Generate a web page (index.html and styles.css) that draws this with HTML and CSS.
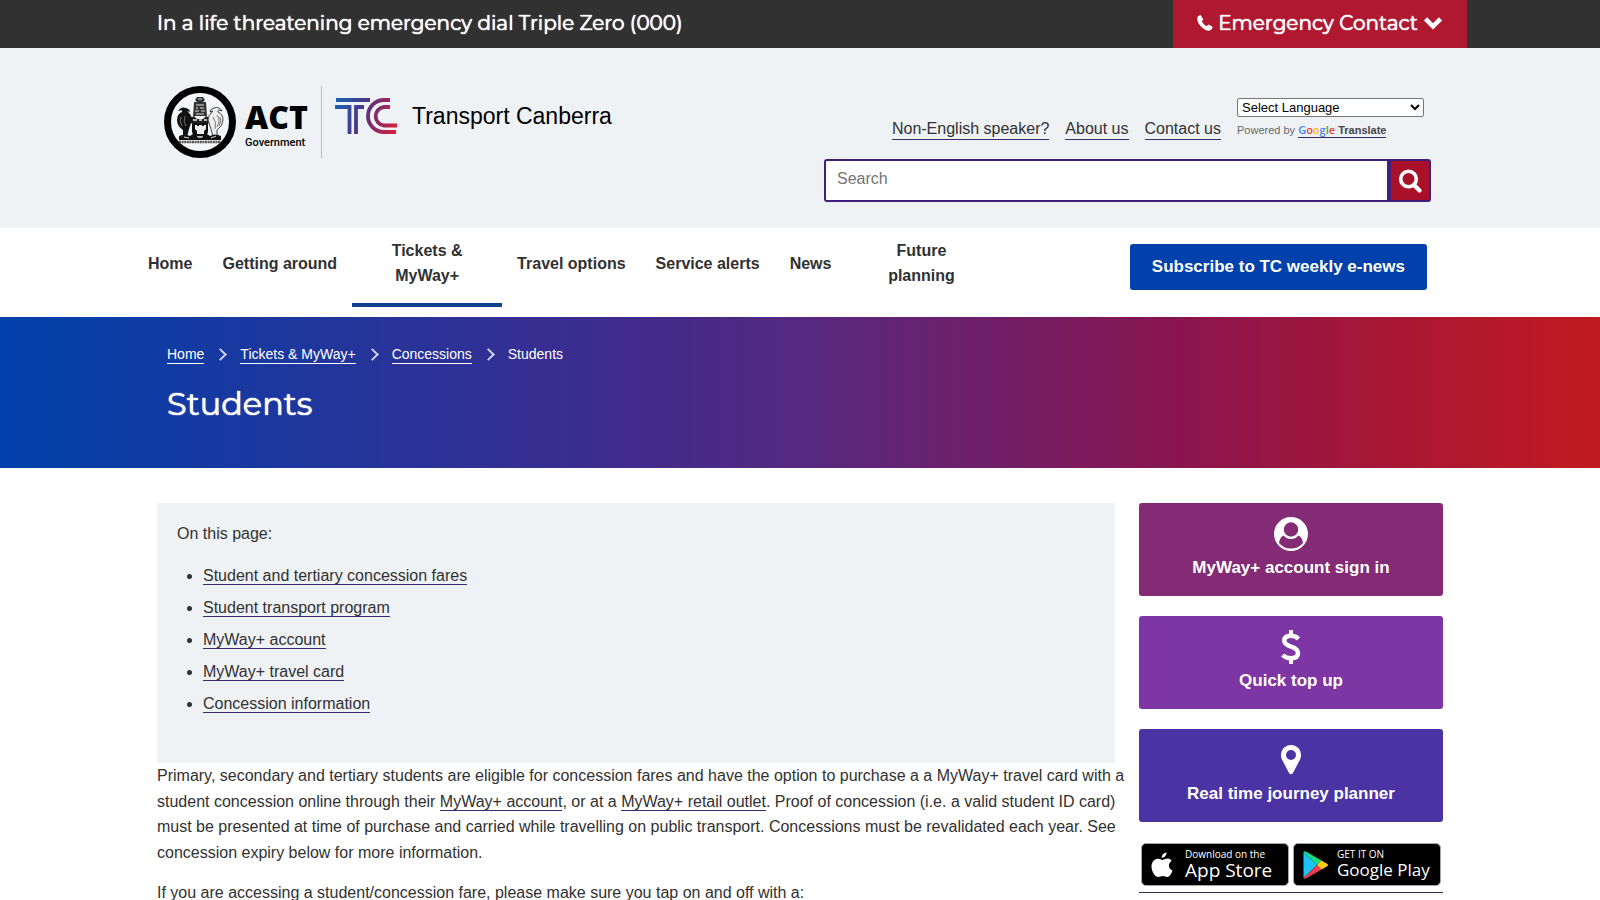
FILE: index.html
```html
<!DOCTYPE html>
<html lang="en">
<head>
<meta charset="utf-8">
<title>Students - Transport Canberra</title>
<meta name="viewport" content="width=device-width, initial-scale=1">
<link rel="stylesheet" href="styles.css">
</head>
<body>
<div class="alert-bar">
  <div class="container alert-inner">
    <p class="alert-text">In a life threatening emergency dial Triple Zero (000)</p>
    <button class="emergency" type="button">
      <svg class="icon-phone" viewBox="0 0 16 16" aria-hidden="true"><path d="M3.600 0 1 1.200C-.4 3 .2 6 2 9c1.900 3 4.500 5.200 7.200 6.300 1.700.7 3.700.5 4.900-.5.900-.8 1.300-1.700 1.400-3L11.500 9.600 9.700 11.300C7.700 10.300 5.800 8.300 4.800 6.200L6.400 4.400z" fill="#fff"/></svg>
      <span>Emergency Contact</span>
      <svg class="icon-chevron" viewBox="0 0 20 14" aria-hidden="true"><path d="M2.500 2.800 10 10.300l7.500-7.500" fill="none" stroke="#fff" stroke-width="4.500"/></svg>
    </button>
  </div>
</div>

<header class="site-header">
  <div class="container header-inner">
    <div class="brand">
      <svg class="crest" viewBox="0 0 72 72" role="img" aria-label="ACT coat of arms">
        <circle cx="36" cy="36" r="32.500" fill="#f4f6f8" stroke="#000" stroke-width="7"/>
        <path d="M33 11h6l2 3-2 2h3l1 14H29l1-14h3l-2-2z" fill="#333"/>
        <path d="M32 19h8M32 22h2m2 0h4M31 25h4m2 0h4M32 28h8M34 13h4" stroke="#ddd" stroke-width="1.200"/>
        <path d="M26 32l4-2 3 3h6l3-3 4 2-1 5-3 2H30l-3-2z" fill="#222"/>
        <path d="M29 34h4m2 0h3m2 0h3" stroke="#e8e8e8" stroke-width="1.500"/>
        <path d="M28 37h16v9q-1 5-8 8-7-3-8-8z" fill="#111"/>
        <path d="M31 43v-4h2v1h2v-1h3v1h2v-1h2v4l-2 2v3h-7v-3z" fill="#eee"/>
        <path d="M33 51h6" stroke="#eee" stroke-width="1.500"/>
        <path d="M14 25q3-5 8-3 4 1 4 4l-3-1q5 4 5 9l-3 9-2 8h-4v-7q-6-4-6-10 0-6 5-8 1-3-4-1z" fill="#111"/>
        <path d="M17 31q-2 5 1 9M21 30q-2 6 1 10" fill="none" stroke="#888" stroke-width=".8"/>
        <path d="M58 25q-3-5-8-3-4 1-4 4l3-1q-5 4-5 9l3 9 2 8h4v-7q6-4 6-10 0-6-5-8-1-3 4-1z" fill="#eee" stroke="#444"/>
        <path d="M49 31q4 5 2 12M53 29q4 5 0 12M56 31q2 4-1 9" fill="none" stroke="#777"/>
        <path d="M15 50q6-3 11 0l3-2 7 5 7-5 3 2q5-3 11 0v4H15z" fill="#111"/>
        <path d="M20 51l5 1M47 52l5-2" stroke="#ddd"/>
        <path d="M15 56h42" stroke="#555" stroke-width="2.500" stroke-dasharray="2 .6"/>
      </svg>
      <div class="act"><strong>ACT</strong><span>Government</span></div>
      <div class="tc">
        <svg class="tc-mark" viewBox="0 0 64 38" aria-hidden="true">
          <defs><linearGradient id="tcg" gradientUnits="userSpaceOnUse" x1="0" y1="8" x2="62" y2="30"><stop offset="0" stop-color="#1765b5"/><stop offset=".45" stop-color="#4f3485"/><stop offset="1" stop-color="#d5203a"/></linearGradient></defs>
          <g fill="none" stroke="url(#tcg)" stroke-width="3.800">
            <path d="M2 3h34M1 10h14.500V37M30 10h-8V37M56 3h-6a16 16 0 0 0 0 32h12M56 10h-6a9.300 9.300 0 0 0 0 18.500h13"/>
          </g>
        </svg>
        <span class="tc-name">Transport Canberra</span>
      </div>
    </div>
    <div class="tools">
      <div class="quick">
        <nav class="quick-links" aria-label="Quick links">
          <a href="#">Non-English speaker?</a><a href="#">About us</a><a href="#">Contact us</a>
        </nav>
        <div class="translate">
          <select aria-label="Select language"><option>Select Language</option></select>
          <p>Powered by <a href="#"><span class="google"><i class="g1">G</i><i class="g2">o</i><i class="g3">o</i><i class="g1">g</i><i class="g4">l</i><i class="g2">e</i></span> <b>Translate</b></a></p>
        </div>
      </div>
      <form class="search">
        <input type="search" placeholder="Search" aria-label="Search">
        <button type="button" aria-label="Submit search"><svg viewBox="0 0 24 24" aria-hidden="true"><circle cx="10.500" cy="10" r="7.800" fill="none" stroke="#fff" stroke-width="3.600"/><path d="m16 16 5.500 5.500" stroke="#fff" stroke-width="4.200" stroke-linecap="round"/></svg></button>
      </form>
    </div>
  </div>
</header>

<nav class="main-nav" aria-label="Main">
  <div class="container nav-inner">
    <ul class="menu">
      <li><a href="#">Home</a></li>
      <li><a href="#">Getting around</a></li>
      <li><a class="wide active" href="#">Tickets &amp;<br>MyWay+</a></li>
      <li><a href="#">Travel options</a></li>
      <li><a href="#">Service alerts</a></li>
      <li><a href="#">News</a></li>
      <li><a class="wide" href="#">Future<br>planning</a></li>
    </ul>
    <a class="subscribe" href="#">Subscribe to TC weekly e-news</a>
  </div>
</nav>

<section class="hero">
  <div class="container hero-inner">
    <ol class="crumbs">
      <li><a href="#">Home</a></li>
      <li><a href="#">Tickets &amp; MyWay+</a></li>
      <li><a href="#">Concessions</a></li>
      <li>Students</li>
    </ol>
    <h1>Students</h1>
  </div>
</section>

<div class="container content">
  <main>
    <div class="toc">
      <p>On this page:</p>
      <ul>
        <li><a href="#">Student and tertiary concession fares</a></li>
        <li><a href="#">Student transport program</a></li>
        <li><a href="#">MyWay+ account</a></li>
        <li><a href="#">MyWay+ travel card</a></li>
        <li><a href="#">Concession information</a></li>
      </ul>
    </div>
    <p class="intro">Primary, secondary and tertiary students are eligible for concession fares and have the option to purchase a a MyWay+ travel card with a<br>student concession online through their <a href="#">MyWay+ account</a>, or at a <a href="#">MyWay+ retail outlet</a>. Proof of concession (i.e. a valid student ID card)<br>must be presented at time of purchase and carried while travelling on public transport. Concessions must be revalidated each year. See<br>concession expiry below for more information.</p>
    <p>If you are accessing a student/concession fare, please make sure you tap on and off with a:</p>
  </main>
  <aside>
    <a class="tile plum" href="#">
      <svg viewBox="0 0 36 36" aria-hidden="true"><circle cx="18" cy="18" r="17" fill="#fff"/><circle cx="18" cy="13.500" r="7.200" fill="#832b74"/><path d="M10.500 19.500Q6.500 21.500 6 27q4.500 5.500 12 5.500T30 27q-.5-5.500-4.500-7.500-3 3.500-7.500 3.500t-7.500-3.500z" fill="#832b74"/></svg>
      <span>MyWay+ account sign in</span>
    </a>
    <a class="tile violet" href="#">
      <svg viewBox="0 0 36 36" aria-hidden="true"><path d="M18 1v5M18 30v5" stroke="#fff" stroke-width="4"/><path d="M25.500 9.800Q22.500 6.800 18 6.800q-6.700 0-6.700 5 0 3.700 6.700 5.800 7 2.200 7 6.500 0 5.200-7 5.200-5 0-8.300-3.300" fill="none" stroke="#fff" stroke-width="4.500"/></svg>
      <span>Quick top up</span>
    </a>
    <a class="tile indigo" href="#">
      <svg viewBox="0 0 36 36" aria-hidden="true"><path fill-rule="evenodd" d="M18 3c-5.500 0-10 4.300-10 10 0 2 .4 3.500 1.200 5l7 13.300q1.800 2 3.600 0l7-13.300c.8-1.500 1.200-3 1.200-5 0-5.700-4.500-10-10-10zm0 5a5 5 0 1 1 0 10 5 5 0 0 1 0-10z" fill="#fff"/></svg>
      <span>Real time journey planner</span>
    </a>
    <div class="stores">
      <a class="badge apple" href="#">
        <svg viewBox="0 0 22 26" aria-hidden="true"><path d="M15.500.5c.2 2.700-2 5.300-4.700 5.300C10.500 3.200 13 .7 15.500.5zM20.600 9c-4 2.500-3.200 8 .9 9.500-1 3-3.100 6.500-5.200 6.500-1.800 0-2.500-1-4.500-1s-2.800 1-4.500 1C4 25 .5 19.500.5 14.500c0-5 3.200-7.800 6.500-7.800 2 0 3.200 1.200 4.700 1.200s3-1.400 5.400-1.300c1.500.1 2.800.9 3.500 2.400z" fill="#fff"/></svg>
        <span class="badge-text"><small>Download on the</small><b>App Store</b></span>
      </a>
      <a class="badge play" href="#">
        <svg viewBox="0 0 26 28" aria-hidden="true"><path d="M.5 1v26L14 14z" fill="#19c4f4"/><path d="M.5 1 14 14l4.500-4.500L3 .5Q1-.3.5 1z" fill="#1ddc80"/><path d="M.5 27 14 14l4.500 4.500L3 27.500q-2 .8-2.500-.5z" fill="#ef3b4f"/><path d="m18.500 9.500 6 3.500q1.500 1 0 2l-6 3.500L14 14z" fill="#fdca12"/></svg>
        <span class="badge-text"><small>GET IT ON</small><b>Google Play</b></span>
      </a>
    </div>
  </aside>
</div>
</body>
</html>
```
FILE: styles.css
```css
* { box-sizing: border-box; }

body {
  margin: 0;
  background: #fff;
  color: #313131;
  font: 16px/1.6 "Liberation Sans", Arial, sans-serif;
}

a {
  color: inherit;
  text-decoration: none;
  border-bottom: 1px solid #3b2a6e;
}

p, ul, ol, h1 { margin: 0; padding: 0; }
button, input { font-family: inherit; }

.container {
  max-width: 1286px;
  margin: 0 auto;
}

.alert-bar { background: #313131; color: #fff; }

.alert-inner {
  display: flex;
  justify-content: space-between;
  align-items: center;
}

.alert-text, .emergency {
  font: 400 20px/46px Montserrat, Inter, sans-serif;
  text-shadow: 0 0 1px #fff, 0 0 1px #fff;
}

.alert-text { padding-bottom: 2px; }

.emergency {
  display: flex;
  align-items: center;
  gap: 5px;
  height: 48px;
  margin-right: -24px;
  padding: 0 24px 2px;
  border: 0;
  background: #b0182f;
  color: #fff;
}

.icon-phone { width: 16px; height: 16px; }
.icon-chevron { width: 20px; height: 14px; }

.site-header { background: #eff2f5; }

.header-inner {
  display: flex;
  justify-content: space-between;
  height: 180px;
}

.brand {
  display: flex;
  align-items: flex-start;
  padding: 38px 0 0 7px;
  color: #000;
}

.crest { width: 72px; height: 72px; }

.act {
  display: flex;
  flex-direction: column;
  width: 76px;
  margin-left: 9px;
  padding-top: 12px;
}

.act strong { font: 800 32px/38px "Open Sans", sans-serif; }
.act span { font: 500 11px/13px Roboto, sans-serif; }

.tc {
  display: flex;
  height: 72px;
  padding: 11px 0 0 12px;
  border-left: 1px solid #b8bcc0;
}

.tc-mark { width: 64px; height: 38px; }

.tc-name {
  margin-left: 14px;
  font-size: 23px;
  line-height: 38px;
}

.tools {
  width: 607px;
  margin-right: 12px;
  padding-top: 50px;
}

.quick { display: flex; justify-content: flex-end; }

.quick-links {
  display: flex;
  gap: 16px;
  align-items: flex-start;
  padding-top: 20px;
}

.quick-links a { line-height: 21px; }

.translate { margin: 0 7px 0 16px; }

.translate select {
  display: block;
  width: 187px;
  height: 19px;
  padding: 0;
  border: 1px solid #767676;
  border-radius: 2px;
  background: #fff;
  color: #000;
  font: 13px "Liberation Sans", Arial, sans-serif;
}

.translate p {
  margin-top: 6px;
  color: #666;
  font-size: 11px;
  line-height: 14px;
}

.translate a { display: inline-block; color: #444; }
.google { font: 600 11px/13px "Open Sans", sans-serif; }
.google i { font-style: normal; }
.g1 { color: #4285f4; }
.g2 { color: #ea4335; }
.g3 { color: #fbbc05; }
.g4 { color: #34a853; }

.search {
  display: flex;
  height: 43px;
  margin-top: 19px;
}

.search input {
  flex: 1;
  min-width: 0;
  padding: 0 11px 4px;
  border: 2px solid #3f1f78;
  border-radius: 3px 0 0 3px;
  background: #fff;
  font-size: 16px;
}

.search input::placeholder { color: #757575; }

.search button {
  display: grid;
  place-items: center;
  width: 42px;
  padding: 0;
  border: 2px solid #3f1f78;
  border-radius: 0 3px 3px 0;
  background: #a9112b;
}

.search svg { width: 24px; height: 24px; }

.nav-inner {
  display: flex;
  justify-content: space-between;
  align-items: flex-start;
  padding-bottom: 10px;
}

.menu {
  display: flex;
  margin-left: -24px;
  list-style: none;
}

.menu a {
  display: flex;
  align-items: center;
  justify-content: center;
  height: 79px;
  padding: 0 15px 5px;
  border-bottom: 4px solid transparent;
  font-weight: 700;
  line-height: 25px;
  text-align: center;
}

.menu .wide { width: 150px; }
.menu .active { border-color: #0f3f8f; }

.subscribe {
  margin: 16px 16px 0 0;
  padding: 10px 22px;
  border: 0;
  border-radius: 3px;
  background: #0041ab;
  color: #fff;
  font-size: 17px;
  font-weight: 700;
  line-height: 26px;
}

.hero {
  background: linear-gradient(90deg, #0041ab 0%, #3a2d90 36%, #552880 50%, #8a154e 74%, #a91734 87%, #c11a20 100%);
  color: #fff;
}

.hero-inner { height: 151px; padding: 26px 10px 0; }

.crumbs {
  display: flex;
  list-style: none;
  font-size: 14px;
  line-height: 22px;
}

.crumbs li { display: flex; align-items: center; }
.crumbs a { line-height: 18px; border-color: #fff; }

.crumbs li + li::before {
  content: "";
  width: 7px;
  height: 7px;
  margin: 0 15px 0 12px;
  border: solid #d0d0ea;
  border-width: 2px 2px 0 0;
  transform: rotate(45deg);
}

.hero h1 {
  margin-top: 19px;
  font: 400 32px/40px Montserrat, Inter, sans-serif;
  text-shadow: 0 0 1px #fff, 0 0 1px #fff;
}

.content {
  display: grid;
  grid-template-columns: minmax(0, 1fr) 304px;
  gap: 24px;
  padding-top: 35px;
}

.toc {
  height: 260px;
  padding: 18px 20px;
  background: #eff2f5;
}

.toc ul { margin-top: 16px; padding-left: 26px; }
.toc li { line-height: 26px; margin-bottom: 6px; }
.intro { margin-right: -16px; }
main p + p { margin-top: 15px; }

aside { display: flex; flex-direction: column; gap: 20px; }

.tile {
  display: flex;
  flex-direction: column;
  align-items: center;
  height: 93px;
  padding-top: 13px;
  border: 0;
  border-radius: 3px;
  color: #fff;
  font-size: 17px;
  font-weight: 700;
  line-height: 31px;
}

.tile svg { width: 36px; height: 36px; }
.plum { background: #832b74; }
.violet { background: #7d36a3; }
.indigo { background: #4a34a3; }

.stores {
  display: flex;
  gap: 4px;
  padding: 1px 2px 6px;
  border-bottom: 1px solid #3b2a4e;
}

.badge {
  display: flex;
  flex: 1;
  align-items: center;
  height: 43px;
  padding-left: 9px;
  border: 1px solid #a6a6a6;
  border-radius: 5px;
  background: #000;
  color: #fff;
}

.badge svg { width: 22px; height: 26px; }
.play svg { width: 26px; height: 28px; }
.badge-text { display: flex; flex-direction: column; margin: 0 0 2px 12px; }
.play .badge-text { margin-left: 8px; }
.badge small { font: 500 10px/12px "Open Sans", sans-serif; }
.badge b { font: 500 19px/20px "Open Sans", sans-serif; white-space: nowrap; }
.play b { font-size: 17px; }
```
